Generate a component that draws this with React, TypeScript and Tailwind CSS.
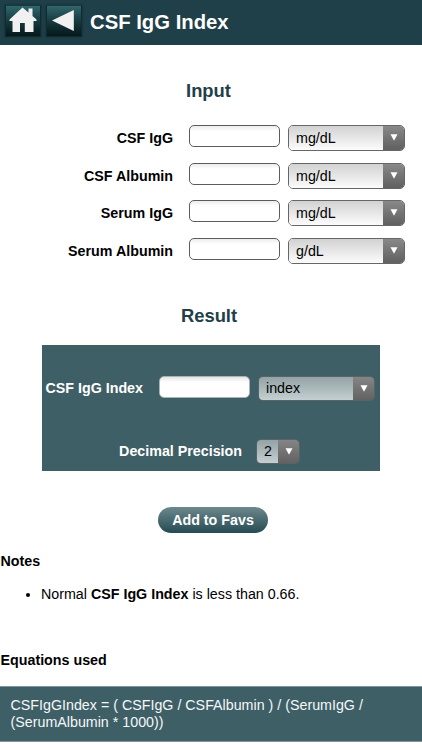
import React, { useState } from 'react';

interface Field {
  label: string;
  unit: string;
}

const fields: Field[] = [
  { label: 'CSF IgG', unit: 'mg/dL' },
  { label: 'CSF Albumin', unit: 'mg/dL' },
  { label: 'Serum IgG', unit: 'mg/dL' },
  { label: 'Serum Albumin', unit: 'g/dL' },
];

function Arrow() {
  return (
    <svg viewBox="0 0 8 7" className="w-[8px] h-[7px] shrink-0">
      <path d="M0.5 0.3h7L4 6.7z" fill="#fff" />
    </svg>
  );
}

function UnitPicker({ value }: { value: string }) {
  return (
    <button className="flex w-[117px] h-[26px] rounded-[5px] border border-[#666] overflow-hidden text-[14.28px] text-black">
      <span className="flex flex-1 items-center pl-[7px] pt-px h-full bg-linear-to-b from-[#d2d2d2] to-[#fcfcfc]">
        {value}
      </span>
      <span className="flex w-[21px] h-full items-center justify-center pb-px bg-linear-to-b from-[#898989] to-[#606060]">
        <Arrow />
      </span>
    </button>
  );
}

function ResultPicker({ value, className }: { value: string; className: string }) {
  return (
    <button
      className={`flex h-[25px] rounded-[5px] border border-[#5a6365] overflow-hidden text-[14.28px] text-black ${className}`}
    >
      <span className="flex flex-1 items-center pl-[7px] h-full bg-linear-to-b from-[#93a3a6] to-[#c4cfd1]">
        {value}
      </span>
      <span className="flex w-[21px] h-full items-center justify-center pb-px bg-linear-to-b from-[#858585] to-[#626262]">
        <Arrow />
      </span>
    </button>
  );
}

function HeaderButton({ label, children }: { label: string; children: React.ReactNode }) {
  return (
    <button
      aria-label={label}
      className="w-9 h-8 border border-[#102c31] border-t-[#183a40] bg-linear-to-b from-[#30676b] via-[#173b40] via-50% to-[#061719] shadow-[0_0_2px_#0d282d]"
    >
      {children}
    </button>
  );
}

export default function App() {
  const [values, setValues] = useState<string[]>(fields.map(() => ''));

  const handleChange = (index: number, value: string) => {
    setValues(values.map((v, i) => (i === index ? value : v)));
  };

  return (
    <div className="w-[422px] h-[750px] overflow-hidden bg-white font-['Liberation_Sans',Arial,sans-serif] text-[14.28px] leading-[17px] text-black">
      <header className="flex h-[45px] items-start gap-[5px] pl-[5px] pt-[5px] bg-[#1f4048]">
        <HeaderButton label="Home">
          <svg viewBox="0 0 34 30" className="w-[34px] h-[30px]">
            <path
              d="M16.5 1.5 L22.5 6.5 V2.5 H26.5 V10 L30.5 13.5 V15 H27.5 V26 H18.8 V17 H14 V26 H6.5 V15 H3.5 V13.5 Z"
              fill="#f1f1f1"
            />
          </svg>
        </HeaderButton>
        <HeaderButton label="Back">
          <svg viewBox="0 0 34 30" className="w-[34px] h-[30px]">
            <path d="M5 14.5 L26.8 4 V25 Z" fill="#f1f1f1" />
          </svg>
        </HeaderButton>
        <h1 className="pl-[3px] pt-[5px] text-[20.3px] leading-6 font-bold text-white">
          CSF IgG Index
        </h1>
      </header>

      <h2 className="mt-[35px] pr-[5px] text-center text-[18.4px] leading-[22px] font-bold text-[#1f4048]">
        Input
      </h2>

      <div className="mt-[23px] flex flex-col gap-[11.7px]">
        {fields.map((field, index) => (
          <div key={field.label} className="flex h-[26px] items-start">
            <label className="w-[173px] pt-[5px] text-right font-bold">{field.label}</label>
            <input
              value={values[index]}
              onChange={(e) => handleChange(index, e.target.value)}
              className="ml-4 w-[91px] h-[22px] px-1.5 rounded-[5px] border border-[#5c5c5c] bg-linear-to-b from-[#ececec] to-white to-25%"
            />
            <div className="ml-2">
              <UnitPicker value={field.unit} />
            </div>
          </div>
        ))}
      </div>

      <h2 className="mt-[41px] pr-[4px] text-center text-[18.4px] leading-[22px] font-bold text-[#1f4048]">
        Result
      </h2>

      <section className="mt-[18px] ml-[42px] w-[338px] h-[126px] pt-[31px] bg-[#3f5f67] text-white">
        <div className="flex items-start">
          <label className="w-[101px] pt-[4px] text-right font-bold">CSF IgG Index</label>
          <input
            readOnly
            className="ml-4 w-[91px] h-[22px] rounded-[5px] border border-[#aab4b7] bg-linear-to-b from-[#e4e4e4] to-white to-25%"
          />
          <div className="ml-2">
            <ResultPicker value="index" className="w-[117px]" />
          </div>
        </div>
        <div className="mt-[38px] flex items-start">
          <label className="w-[200px] pt-[4px] text-right font-bold">Decimal Precision</label>
          <div className="ml-[14px]">
            <ResultPicker value="2" className="w-[44px]" />
          </div>
        </div>
      </section>

      <button className="block mt-[36px] ml-[158px] w-[110px] h-[26px] rounded-full bg-linear-to-b from-[#6c898d] to-[#274b53] text-[14.28px] font-bold text-white">
        Add to Favs
      </button>

      <h3 className="mt-[20px] pl-[0.5px] font-bold">Notes</h3>
      <ul className="mt-[16px] pl-[41px] list-disc">
        <li>
          Normal <b>CSF IgG Index</b> is less than 0.66.
        </li>
      </ul>

      <h3 className="mt-[49px] pl-[0.5px] font-bold">Equations used</h3>
      <p className="mt-[17px] h-[56px] pl-[10.5px] pt-[10px] bg-[#3f5f67] border-y border-[#7f979c] text-[#f4f8f8]">
        CSFIgGIndex = ( CSFIgG / CSFAlbumin ) / (SerumIgG /
        <br />
        (SerumAlbumin * 1000))
      </p>
    </div>
  );
}
